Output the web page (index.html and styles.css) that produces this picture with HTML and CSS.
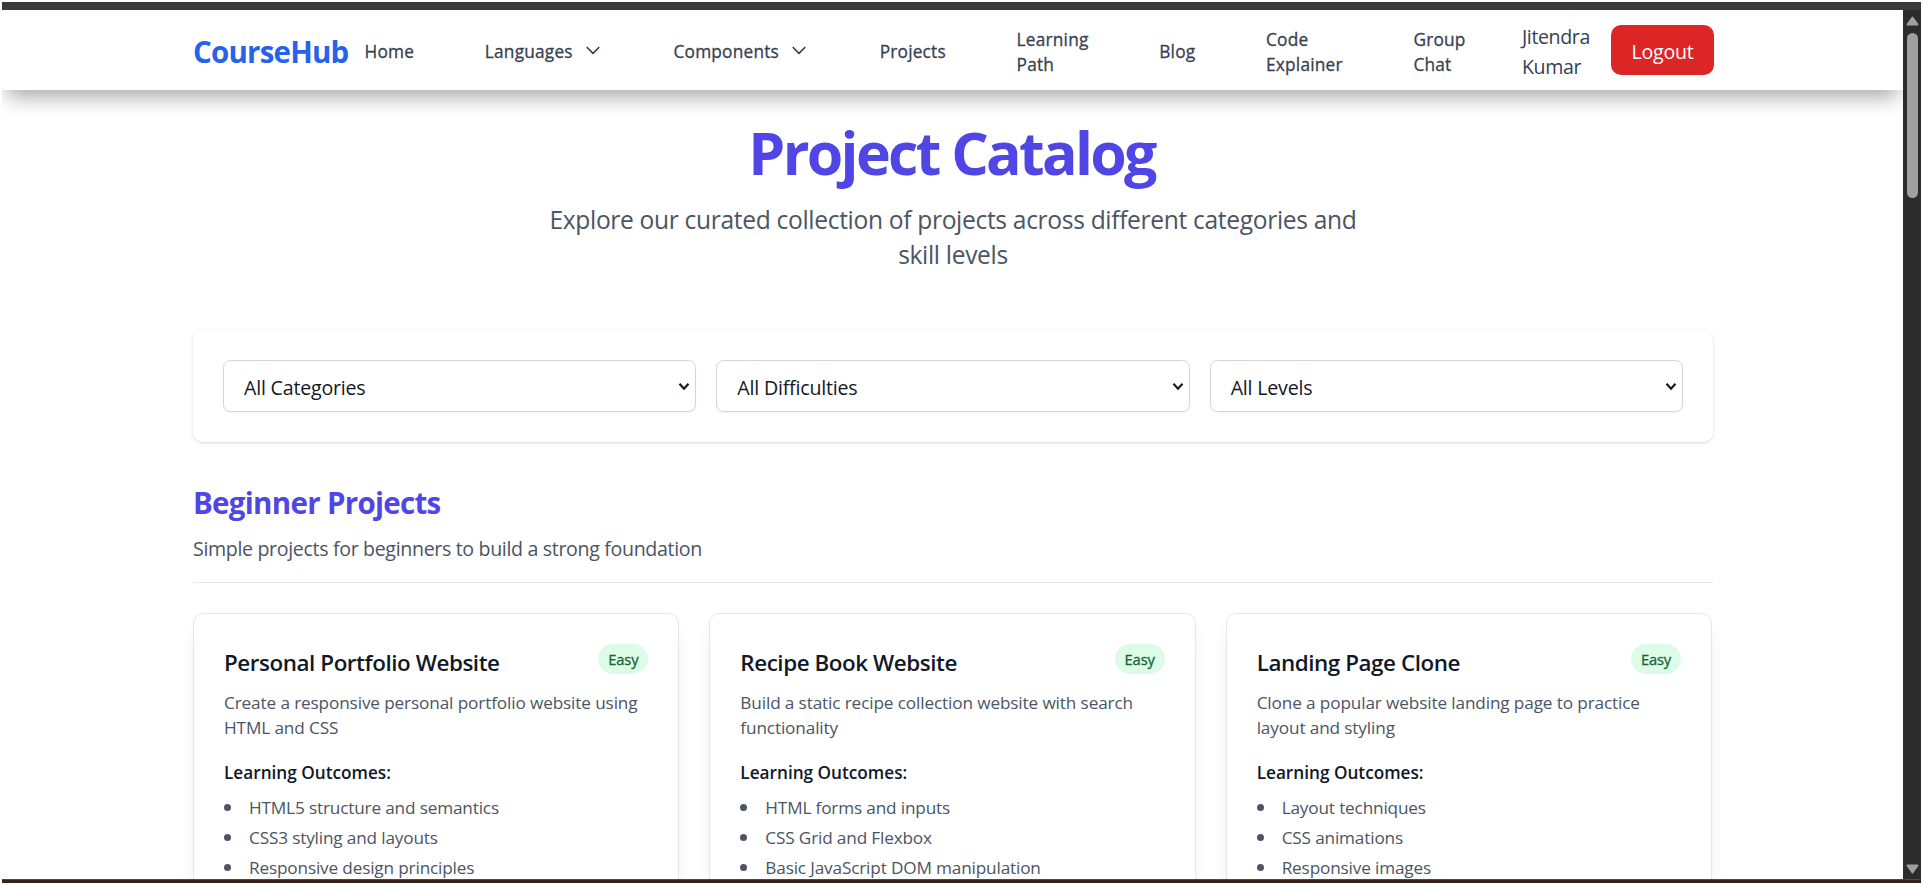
FILE: index.html
```html
<!DOCTYPE html>
<html lang="en">
<head>
<meta charset="utf-8">
<title>CourseHub - Project Catalog</title>
<link rel="stylesheet" href="styles.css">
</head>
<body>
<div class="window">
  <div class="top-edge"></div>
  <div class="viewport">
    <div class="page">
      <header class="header">
        <div class="container header-row">
          <a class="logo">CourseHub</a>
          <nav class="nav">
            <a>Home</a>
            <a class="has-menu">Languages<svg class="chevron" viewBox="0 0 24 24"><path d="M19 9l-7 7-7-7"/></svg></a>
            <a class="has-menu">Components<svg class="chevron" viewBox="0 0 24 24"><path d="M19 9l-7 7-7-7"/></svg></a>
            <a>Projects</a>
            <a>Learning<br>Path</a>
            <a>Blog</a>
            <a>Code<br>Explainer</a>
            <a>Group<br>Chat</a>
          </nav>
          <div class="account">
            <span class="user">Jitendra Kumar</span>
            <button class="logout">Logout</button>
          </div>
        </div>
      </header>
      <main class="container main">
        <h1 class="title">Project Catalog</h1>
        <p class="lead">Explore our curated collection of projects across different categories and<br>skill levels</p>
        <div class="filters">
          <div class="select"><span>All Categories</span><svg viewBox="0 0 12 9"><path d="M1.5 1.8L6 6.7l4.500-4.900"/></svg></div>
          <div class="select"><span>All Difficulties</span><svg viewBox="0 0 12 9"><path d="M1.5 1.8L6 6.7l4.500-4.900"/></svg></div>
          <div class="select"><span>All Levels</span><svg viewBox="0 0 12 9"><path d="M1.5 1.8L6 6.7l4.500-4.900"/></svg></div>
        </div>
        <section>
          <div class="section-head">
            <h2>Beginner Projects</h2>
            <p>Simple projects for beginners to build a strong foundation</p>
          </div>
          <div class="cards">
            <article class="card">
              <div class="card-head"><h3>Personal Portfolio Website</h3><span class="badge">Easy</span></div>
              <p class="desc">Create a responsive personal portfolio website using<br>HTML and CSS</p>
              <h4>Learning Outcomes:</h4>
              <ul>
                <li>HTML5 structure and semantics</li>
                <li>CSS3 styling and layouts</li>
                <li>Responsive design principles</li>
              </ul>
            </article>
            <article class="card">
              <div class="card-head"><h3>Recipe Book Website</h3><span class="badge">Easy</span></div>
              <p class="desc">Build a static recipe collection website with search<br>functionality</p>
              <h4>Learning Outcomes:</h4>
              <ul>
                <li>HTML forms and inputs</li>
                <li>CSS Grid and Flexbox</li>
                <li>Basic JavaScript DOM manipulation</li>
              </ul>
            </article>
            <article class="card">
              <div class="card-head"><h3>Landing Page Clone</h3><span class="badge">Easy</span></div>
              <p class="desc">Clone a popular website landing page to practice<br>layout and styling</p>
              <h4>Learning Outcomes:</h4>
              <ul>
                <li>Layout techniques</li>
                <li>CSS animations</li>
                <li>Responsive images</li>
              </ul>
            </article>
          </div>
        </section>
      </main>
    </div>
    <div class="scrollbar">
      <svg class="arrow" viewBox="0 0 13 10"><path d="M6.500 1.500L11.500 8.500h-10z"/></svg>
      <div class="thumb"></div>
      <svg class="arrow arrow-down" viewBox="0 0 13 10"><path d="M6.500 8.500L11.500 1.500h-10z"/></svg>
    </div>
  </div>
  <div class="bottom-edge"></div>
</div>
</body>
</html>
```
FILE: styles.css
```css
* { box-sizing: border-box; margin: 0; padding: 0; }

body {
  height: 885px;
  padding: 2px;
  overflow: hidden;
  background: #fff;
  color: #111827;
  font-family: "Open Sans", "Noto Sans", sans-serif;
}

.window { display: flex; flex-direction: column; height: 881px; }
.top-edge { height: 8px; background: #3b3b3b; flex: none; }
.bottom-edge { height: 4px; background: #35231a; border-top: 1px solid #57473b; flex: none; }
.viewport { flex: 1; display: flex; min-height: 0; }
.page { flex: 1; min-width: 0; height: 869px; overflow: hidden; }

.container { width: 1520px; margin: 0 190px 0 191px; }

.header {
  position: relative;
  z-index: 1;
  height: 80px;
  background: #fff;
  box-shadow: 0 12.5px 19px -5px rgba(0, 0, 0, .33);
}
.header-row { display: flex; align-items: center; height: 80px; }
.logo {
  width: 171.500px;
  padding-top: 3px;
  color: #2563eb;
  font-size: 29.5px;
  font-weight: 700;
  letter-spacing: -.8px;
}
.nav {
  display: flex;
  align-items: center;
  gap: 70.700px;
  color: #374151;
  font-size: 17.3px;
  font-weight: 500;
  line-height: 25px;
  letter-spacing: .2px;
  padding-top: 3px;
  white-space: nowrap;
  -webkit-text-stroke: .3px currentColor;
}
.has-menu { display: flex; align-items: center; gap: 10px; }
.chevron { width: 20px; height: 20px; fill: none; stroke: #374151; stroke-width: 2; stroke-linecap: round; stroke-linejoin: round; margin-top: -3px; }
.account { display: flex; align-items: center; margin: 0 -1px 0 auto; }
.user {
  width: 89px;
  padding-right: 10px;
  padding-top: 3px;
  color: #374151;
  font-size: 19.6px;
  line-height: 30px;
  letter-spacing: -.4px;
}
.logout {
  width: 103px;
  height: 50px;
  padding-top: 3px;
  border: 0;
  border-radius: 10px;
  background: #dc2626;
  color: #fff;
  font: 400 19.6px/30px "Open Sans", "Noto Sans", sans-serif;
  letter-spacing: -.25px;
}

.main { padding-top: 25px; }
.title {
  height: 75px;
  padding-right: 3px;
  color: #4f46e5;
  font-size: 59px;
  font-weight: 700;
  line-height: 75px;
  letter-spacing: -2.7px;
  text-align: center;
}
.lead {
  margin-top: 12px;
  color: #4b5563;
  font-size: 24.6px;
  line-height: 35px;
  letter-spacing: -.33px;
  text-align: center;
}
.filters {
  display: grid;
  grid-template-columns: repeat(3, 1fr);
  gap: 20px;
  margin-top: 58px;
  padding: 30px;
  border-radius: 10px;
  box-shadow: 0 1px 4px rgba(0, 0, 0, .1), 0 1px 2px rgba(0, 0, 0, .06);
}
.select {
  display: flex;
  align-items: center;
  justify-content: space-between;
  height: 52px;
  padding: 3px 5px 0 20px;
  border: 1px solid #d1d5db;
  border-radius: 7.5px;
  box-shadow: 0 1px 2px rgba(0, 0, 0, .06);
  font-size: 19.6px;
  letter-spacing: -.2px;
}
.select svg { width: 12px; height: 9px; margin-top: -2px; fill: none; stroke: #111827; stroke-width: 2.2; }

.section-head {
  height: 101px;
  margin-top: 40px;
  padding-top: 1px;
  border-bottom: 1px solid #e5e7eb;
}
.section-head h2 {
  color: #4f46e5;
  font-size: 29.5px;
  line-height: 40px;
  letter-spacing: -.7px;
}
.section-head p {
  margin-top: 11px;
  color: #4b5563;
  font-size: 19.6px;
  line-height: 30px;
  letter-spacing: -.34px;
}

.cards { display: grid; grid-template-columns: repeat(3, 1fr); gap: 30px; width: 1519px; margin-top: 30px; }
.card {
  height: 460px;
  padding: 30px;
  border: 1px solid #e5e7eb;
  border-radius: 10px;
  background: #fff;
  box-shadow: 0 12px 19px -4px rgba(0, 0, 0, .08), 0 5px 8px -5px rgba(0, 0, 0, .06);
  white-space: nowrap;
}
.card-head { display: flex; justify-content: space-between; align-items: flex-start; height: 35px; }
.card h3 { padding-top: 1px; font-size: 22.4px; font-weight: 600; line-height: 35px; letter-spacing: -.43px; }
.badge {
  width: 50px;
  height: 30px;
  border-radius: 15px;
  background: #dcfce7;
  color: #166534;
  font-size: 14.8px;
  font-weight: 500;
  line-height: 30px;
  letter-spacing: -.2px;
  text-align: center;
  -webkit-text-stroke: .3px currentColor;
}
.desc { margin-top: 11px; color: #4b5563; font-size: 17.2px; line-height: 25px; letter-spacing: -.13px; }
.card h4 { margin-top: 20px; font-size: 17.2px; font-weight: 600; line-height: 25px; }
.card ul { display: grid; gap: 5px; margin-top: 10px; list-style: none; }
.card li { display: flex; align-items: center; gap: 18px; color: #4b5563; font-size: 17.2px; line-height: 25px; letter-spacing: -.16px; }
.card li::before { content: ""; width: 7px; height: 7px; border-radius: 50%; background: #4b5563; }

.scrollbar {
  display: flex;
  flex-direction: column;
  align-items: center;
  width: 18px;
  padding: 6px 0 5px;
  background: #2c2c2c;
}
.arrow { width: 13px; height: 10px; fill: #9f9f9f; stroke: #9f9f9f; stroke-width: 2; stroke-linejoin: round; }
.arrow-down { margin-top: auto; }
.thumb { width: 11px; height: 165px; margin-top: 7px; border-radius: 6px; background: #9f9f9f; }
```
